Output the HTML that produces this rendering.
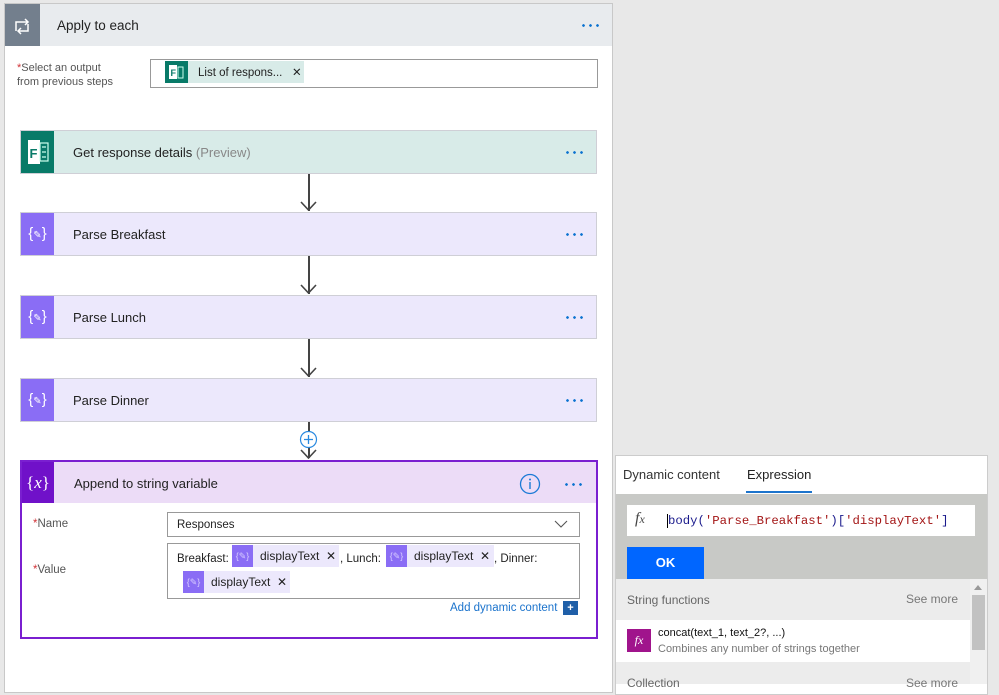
<!DOCTYPE html>
<html><head><meta charset="utf-8"><style>
*{box-sizing:border-box;margin:0;padding:0}
body{width:999px;height:683px;overflow:hidden;background:#e8e8e8;font-family:"Liberation Sans",sans-serif;font-size:13px;color:#222;position:relative}
.a{position:absolute}
.dots{position:absolute;right:12px;top:50%;margin-top:-1px;width:20px;height:3px;background:radial-gradient(circle,#0a72d0 1.2px,transparent 1.5px) 0 0/7px 3px repeat-x}
.card{position:absolute;left:20px;width:577px;height:44px;border:1px solid #cfcfd6}
.card .ic{position:absolute;left:0;top:0;width:33px;height:42px}
.card .t{position:absolute;left:52px;top:14px}
.vline{position:absolute;left:308px;width:1.5px;background:#444}
.arr{position:absolute;left:300px;width:17px;height:10px}
.tok{position:absolute;height:22px;background:#ece8fc;font-size:12px;line-height:22px}
.tok i{position:absolute;left:0;top:0;width:21px;height:22px;background:#8a6df5;color:#d8ccff;font-style:normal;font-size:9px;text-align:center}
.tok span{position:absolute;left:28px}
.pic{background:#8a6df5;color:#fff;text-align:center;line-height:42px;font-size:15px}
</style></head><body>
<div class="a" style="left:4px;top:3px;width:609px;height:690px;background:#fff;border:1px solid #c8c8c8"></div>
<div class="a" style="left:5px;top:4px;width:607px;height:42px;background:#e8ebee"></div>
<div class="a" style="left:5px;top:4px;width:35px;height:42px;background:#737f8d">
<svg width="35" height="42"><g fill="none" stroke="#fff" stroke-width="1.5"><path d="M11 27v-9h12"/><path d="M20 15l3 3-3 3"/><path d="M23 20v7H13"/><path d="M16 24l-3 3 3 3"/></g></svg></div>
<div class="a" style="left:57px;top:18px;font-size:13.5px">Apply to each</div>
<div class="dots" style="left:580px;top:25px;right:auto"></div>
<div class="a" style="left:17px;top:61px;font-size:11px;color:#555;line-height:14px"><span style="color:#d13438">*</span>Select an output<br>from previous steps</div>
<div class="a" style="left:150px;top:59px;width:448px;height:29px;border:1px solid #999"></div>
<div class="a" style="left:165px;top:61px;width:139px;height:22px;background:#d8ebe8"></div>
<div class="a" style="left:165px;top:61px;width:23px;height:22px;background:#087a68"><svg width="23" height="22"><rect x="4" y="4" width="8" height="14" fill="#fff"/><text x="5.5" y="15" font-size="9" font-weight="bold" fill="#087a68" font-family="Liberation Sans">F</text><rect x="13" y="6" width="5" height="11" fill="none" stroke="#cfe" stroke-width="1"/></svg></div>
<div class="a" style="left:198px;top:65px;font-size:11.5px">List of respons...&nbsp;&nbsp;&nbsp;✕</div>

<div class="card" style="top:130px;background:#d8ebe8"><div class="ic" style="background:#087a68"><svg width="33" height="42"><rect x="7" y="9" width="12" height="24" fill="#fff"/><text x="8.5" y="27" font-size="13" font-weight="bold" fill="#087a68" font-family="Liberation Sans">F</text><rect x="19" y="12" width="8" height="18" fill="none" stroke="#cfe" stroke-width="1.2"/><path d="M21 16h4M21 21h4M21 26h4" stroke="#cfe" stroke-width="1.2"/></svg></div><div class="t">Get response details <span style="color:#888">(Preview)</span></div><div class="dots"></div></div>
<div class="vline" style="top:174px;height:37px"></div>
<svg class="arr" style="top:201px" viewBox="0 0 17 10"><path d="M1 1l7.5 8L16 1" fill="none" stroke="#444" stroke-width="1.6"/></svg>

<div class="card" style="top:212px;background:#ece8fc"><div class="ic pic">{<span style="font-size:10px">✎</span>}</div><div class="t">Parse Breakfast</div><div class="dots"></div></div>
<div class="vline" style="top:256px;height:38px"></div>
<svg class="arr" style="top:284px" viewBox="0 0 17 10"><path d="M1 1l7.5 8L16 1" fill="none" stroke="#444" stroke-width="1.6"/></svg>

<div class="card" style="top:295px;background:#ece8fc"><div class="ic pic">{<span style="font-size:10px">✎</span>}</div><div class="t">Parse Lunch</div><div class="dots"></div></div>
<div class="vline" style="top:339px;height:38px"></div>
<svg class="arr" style="top:367px" viewBox="0 0 17 10"><path d="M1 1l7.5 8L16 1" fill="none" stroke="#444" stroke-width="1.6"/></svg>

<div class="card" style="top:378px;background:#ece8fc"><div class="ic pic">{<span style="font-size:10px">✎</span>}</div><div class="t">Parse Dinner</div><div class="dots"></div></div>
<div class="vline" style="top:422px;height:36px"></div>
<svg class="arr" style="top:449px" viewBox="0 0 17 10"><path d="M1 1l7.5 8L16 1" fill="none" stroke="#444" stroke-width="1.6"/></svg>
<svg class="a" style="left:299px;top:430px" width="19" height="19"><circle cx="9.5" cy="9.5" r="8" fill="#fff" stroke="#2a8ae0" stroke-width="1.2"/><path d="M9.5 5v9M5 9.5h9" stroke="#2a8ae0" stroke-width="1.3"/></svg>

<div class="a" style="left:20px;top:460px;width:578px;height:179px;background:#fff;border:2px solid #7a1fd0"></div>
<div class="a" style="left:22px;top:462px;width:574px;height:41px;background:#ecdcf7"></div>
<div class="a" style="left:22px;top:462px;width:32px;height:41px;background:#7011c9;color:#fff;font-size:17px;font-family:'Liberation Serif',serif;line-height:41px;text-align:center">{<i>x</i>}</div>
<div class="a" style="left:74px;top:476px;font-size:13px">Append to string variable</div>
<svg class="a" style="left:519px;top:473px" width="22" height="22"><circle cx="11" cy="11" r="9.5" fill="none" stroke="#1b7ad6" stroke-width="1.3"/><path d="M11 9v7" stroke="#1b7ad6" stroke-width="1.4"/><circle cx="11" cy="6.5" r="1" fill="#1b7ad6"/></svg>
<div class="dots" style="left:563px;top:484px;right:auto"></div>
<div class="a" style="left:33px;top:518px;font-size:11.5px;color:#555"><span style="color:#d13438">*</span>Name</div>
<div class="a" style="left:167px;top:512px;width:413px;height:25px;border:1px solid #999;font-size:11.5px;padding:6px 0 0 9px">Responses</div>
<svg class="a" style="left:554px;top:520px" width="14" height="9"><path d="M1 1l6 6 6-6" fill="none" stroke="#555" stroke-width="1.1"/></svg>
<div class="a" style="left:33px;top:564px;font-size:11.5px;color:#555"><span style="color:#d13438">*</span>Value</div>
<div class="a" style="left:167px;top:543px;width:413px;height:56px;border:1px solid #999"></div>
<div class="a" style="left:177px;top:553px;font-size:11.5px">Breakfast:</div>
<div class="tok" style="left:232px;top:545px;width:107px"><i>{✎}</i><span>displayText&nbsp; ✕</span></div>
<div class="a" style="left:340px;top:553px;font-size:11.5px">, Lunch:</div>
<div class="tok" style="left:386px;top:545px;width:108px"><i>{✎}</i><span>displayText&nbsp; ✕</span></div>
<div class="a" style="left:494px;top:553px;font-size:11.5px">, Dinner:</div>
<div class="tok" style="left:183px;top:571px;width:107px"><i>{✎}</i><span>displayText&nbsp; ✕</span></div>
<div class="a" style="left:450px;top:602px;font-size:11.5px;color:#1b73cc">Add dynamic content</div>
<div class="a" style="left:563px;top:601px;width:15px;height:14px;background:#1f5fa8;color:#fff;font-size:11px;line-height:14px;text-align:center;font-weight:bold">+</div>

<div class="a" style="left:615px;top:455px;width:373px;height:240px;background:#fff;border:1px solid #ccc"></div>
<div class="a" style="left:623px;top:467px;font-size:13px;color:#333">Dynamic content</div>
<div class="a" style="left:747px;top:467px;font-size:13px;color:#222">Expression</div>
<div class="a" style="left:746px;top:491px;width:66px;height:2px;background:#1b73cc"></div>
<div class="a" style="left:616px;top:494px;width:371px;height:85px;background:#c8c9c6"></div>
<div class="a" style="left:627px;top:505px;width:348px;height:31px;background:#fff"></div>
<div class="a" style="left:635px;top:510px;font-family:'Liberation Serif',serif;font-style:italic;font-size:16px;color:#444">f<span style="font-size:12px">x</span></div>
<div class="a" style="left:667px;top:514px;font-family:'Liberation Mono',monospace;font-size:12.3px;color:#1a1a8c;white-space:pre"><span style="border-left:1.5px solid #000">body</span>(<span style="color:#a31515">'Parse_Breakfast'</span>)[<span style="color:#a31515">'displayText'</span>]</div>
<div class="a" style="left:627px;top:547px;width:77px;height:32px;background:#0066ff;color:#fff;font-weight:bold;font-size:13px;text-align:center;line-height:32px">OK</div>
<div class="a" style="left:616px;top:579px;width:354px;height:41px;background:#ececec"></div>
<div class="a" style="left:627px;top:593px;font-size:12px;color:#666">String functions</div>
<div class="a" style="left:906px;top:592px;font-size:12px;color:#777">See more</div>
<div class="a" style="left:627px;top:629px;width:24px;height:23px;background:#a0148c;color:#fff;font-family:'Liberation Serif',serif;font-style:italic;font-size:12px;text-align:center;line-height:23px">fx</div>
<div class="a" style="left:658px;top:627px;font-size:11px;color:#111">concat(text_1, text_2?, ...)</div>
<div class="a" style="left:658px;top:643px;font-size:11px;color:#777">Combines any number of strings together</div>
<div class="a" style="left:616px;top:662px;width:354px;height:22px;background:#ececec"></div>
<div class="a" style="left:627px;top:676px;font-size:12px;color:#666">Collection</div>
<div class="a" style="left:906px;top:676px;font-size:12px;color:#777">See more</div>
<div class="a" style="left:970px;top:579px;width:17px;height:105px;background:#f0f0f0"></div>
<div class="a" style="left:972px;top:595px;width:13px;height:55px;background:#c2c2c2"></div>
<div class="a" style="left:974px;top:585px;width:0;height:0;border:4px solid transparent;border-bottom:5px solid #999;border-top:0"></div>
</body></html>
